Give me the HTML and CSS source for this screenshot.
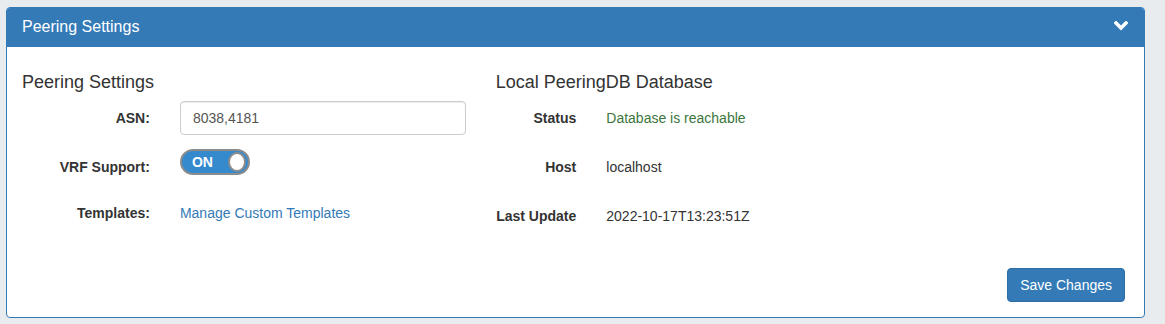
FILE: index.html
```html
<!doctype html>
<html lang="en">
    <head>
        <meta charset="UTF-8" />
        <meta name="viewport" content="width=device-width, initial-scale=1.0" />
        <title>Peering Settings</title>
        <link rel="stylesheet" href="styles.css">
    </head>
    <body>
        <div class="page">
            <div class="panel">
                <div class="panel-heading">
                    <h3 class="panel-title">Peering Settings</h3>
                    <svg class="chevron" width="14" height="10" viewBox="0 0 14 10">
                        <polyline points="2,2 7,7 12,2" fill="none" stroke="#fff" stroke-width="3.6" stroke-linecap="square" />
                    </svg>
                </div>
                <div class="panel-body">
                    <div class="row">
                        <div class="col col-left">
                            <h4 class="section-title">Peering Settings</h4>
                            <div class="form-group">
                                <label class="control-label">ASN:</label>
                                <div class="control">
                                    <input class="form-control" type="text" value="8038,4181" />
                                </div>
                            </div>
                            <div class="form-group form-group-toggle">
                                <label class="control-label">VRF Support:</label>
                                <div class="control">
                                    <div class="toggle">
                                        <span class="toggle-label">ON</span>
                                        <span class="toggle-knob"></span>
                                    </div>
                                </div>
                            </div>
                            <div class="form-group">
                                <label class="control-label">Templates:</label>
                                <div class="control">
                                    <p class="static"><a href="#">Manage Custom Templates</a></p>
                                </div>
                            </div>
                        </div>
                        <div class="col col-right">
                            <h4 class="section-title">Local PeeringDB Database</h4>
                            <div class="form-group">
                                <label class="control-label">Status</label>
                                <div class="control">
                                    <p class="static text-success">Database is reachable</p>
                                </div>
                            </div>
                            <div class="form-group">
                                <label class="control-label">Host</label>
                                <div class="control">
                                    <p class="static">localhost</p>
                                </div>
                            </div>
                            <div class="form-group">
                                <label class="control-label">Last Update</label>
                                <div class="control">
                                    <p class="static">2022-10-17T13:23:51Z</p>
                                </div>
                            </div>
                        </div>
                    </div>
                    <div class="actions">
                        <button class="btn-primary">Save Changes</button>
                    </div>
                </div>
            </div>
        </div>
    </body>
</html>
```

FILE: styles.css
```css
:root {
    --color-primary: #337ab7;
    --color-primary-border: #2e6da4;
    --color-text: #333;
    --color-page: #e9ecef;
    --color-success: #3c763d;
}

*,
html,
body {
    margin: 0;
    padding: 0;
    box-sizing: border-box;
    font-family: "Liberation Sans", Arial, sans-serif;
}

body {
    background-color: var(--color-page);
    color: var(--color-text);
    font-size: 14px;
    line-height: 20px;
}

.page {
    padding: 7px 20px 0 6px;
}

.panel {
    background-color: #fff;
    border: 1px solid var(--color-primary);
    border-radius: 4px;
    overflow: hidden;
}

.panel-heading {
    display: flex;
    align-items: center;
    justify-content: space-between;
    height: 39px;
    padding: 0 16px 2px 15px;
    background-color: var(--color-primary);
    color: #fff;
}

.panel-title {
    font-size: 16px;
    font-weight: 400;
    line-height: 19px;
    color: #fff;
}

.chevron {
    display: block;
    margin-bottom: 1px;
}

.panel-body {
    padding: 15px 0;
}

.row {
    display: grid;
    grid-template-columns: 5fr 7fr;
}

.section-title {
    font-size: 18px;
    font-weight: 400;
    line-height: 20px;
    margin: 10px 0 9px;
    padding: 0 15px;
}

.form-group {
    display: grid;
    margin-bottom: 15px;
    min-height: 34px;
}

.col-left .form-group {
    grid-template-columns: 4fr 8fr;
}

.col-right .form-group {
    grid-template-columns: 2fr 10fr;
}

.form-group-toggle {
    min-height: 31px;
    height: 31px;
}

.control-label {
    padding: 7px 15px 0;
    text-align: right;
    font-weight: 700;
}

.control {
    padding: 0 15px;
}

.form-control {
    display: block;
    width: 100%;
    height: 34px;
    padding: 6px 12px;
    font-size: 14px;
    color: #555;
    background-color: #fff;
    border: 1px solid #ccc;
    border-radius: 4px;
    box-shadow: inset 0 1px 1px rgba(0, 0, 0, 0.075);
    outline: none;
}

.toggle {
    display: flex;
    align-items: center;
    justify-content: space-between;
    width: 70px;
    height: 26px;
    margin-top: -1px;
    padding: 0 2px 0 10px;
    background-color: #3589cd;
    border: 2px solid #8c8c8c;
    border-radius: 13px;
}

.toggle-label {
    color: #fff;
    font-weight: 700;
    font-size: 14px;
    line-height: 20px;
}

.toggle-knob {
    width: 18px;
    height: 20px;
    background-color: #fff;
    border: 2px solid #8c8c8c;
    border-radius: 50%;
}

.static {
    padding: 7px 0;
    min-height: 34px;
}

.static a {
    color: var(--color-primary);
    text-decoration: none;
}

.text-success {
    color: var(--color-success);
}

.actions {
    display: flex;
    justify-content: flex-end;
    margin-top: 20px;
    padding-right: 19px;
}

.btn-primary {
    height: 34px;
    padding: 6px 12px;
    font-size: 14px;
    line-height: 20px;
    color: #fff;
    background-color: var(--color-primary);
    border: 1px solid var(--color-primary-border);
    border-radius: 4px;
    cursor: pointer;
}
```
